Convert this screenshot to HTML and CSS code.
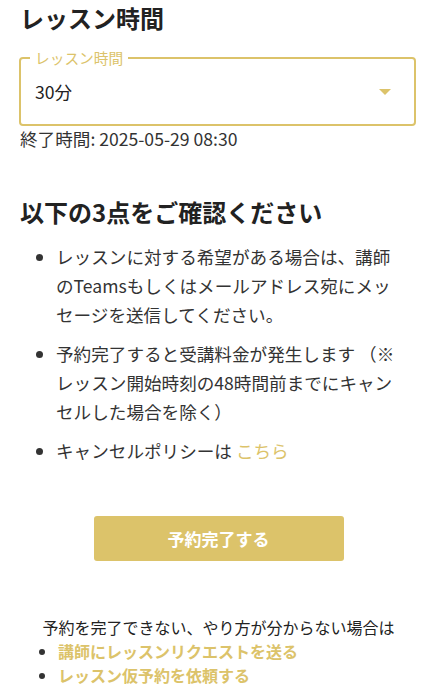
FILE: index.html
```html
<!DOCTYPE html>
<html lang="ja">
  <head>
    <meta charset="UTF-8" />
    <meta name="viewport" content="width=device-width, initial-scale=1.0" />
    <title>レッスン予約確認</title>
    <link rel="stylesheet" href="styles.css">
  </head>
  <body>
    <main class="page">
      <!-- レッスン時間 -->
      <section class="duration">
        <h2 class="section-title">レッスン時間</h2>
        <div class="select-box">
          <span class="select-label">レッスン時間</span>
          <span class="select-value">30分</span>
          <svg class="select-arrow" width="12" height="6" viewBox="0 0 12 6">
            <path d="M0 0h12L6 6z" fill="#dcc36a" />
          </svg>
        </div>
        <p class="end-time">終了時間: 2025-05-29 08:30</p>
      </section>

      <!-- 確認事項 -->
      <section class="notice">
        <h2 class="section-title">以下の3点をご確認ください</h2>
        <ul class="notice-list">
          <li>レッスンに対する希望がある場合は、講師のTeamsもしくはメールアドレス宛にメッセージを送信してください。</li>
          <li>予約完了すると受講料金が発生します （※レッスン開始時刻の48時間前までにキャンセルした場合を除く）</li>
          <li>キャンセルポリシーは <a href="#" class="link">こちら</a></li>
        </ul>
      </section>

      <div class="actions">
        <button class="submit-btn">予約完了する</button>
      </div>

      <!-- ヘルプ -->
      <section class="help">
        <p class="help-text">予約を完了できない、やり方が分からない場合は</p>
        <ul class="help-list">
          <li><a href="#" class="link strong">講師にレッスンリクエストを送る</a></li>
          <li><a href="#" class="link strong">レッスン仮予約を依頼する</a></li>
        </ul>
      </section>
    </main>
  </body>
</html>
```

FILE: styles.css
```css
:root {
  --gold: #dcc36a;
  --text-color: #333;
  --title-color: #222;
}

body {
  margin: 0;
  background-color: #fff;
  color: var(--text-color);
  font-family: "Noto Sans CJK JP", "Noto Sans", sans-serif;
}

.page {
  padding: 0 20px;
}

.section-title {
  margin: 0;
  font-size: 24px;
  line-height: 36px;
  font-weight: 700;
  color: var(--title-color);
}

/* セレクト */
.select-box {
  position: relative;
  display: flex;
  align-items: center;
  justify-content: space-between;
  margin: 21px 1px 0 -1px;
  padding: 0 23px 0 14px;
  height: 69px;
  box-sizing: border-box;
  border: 2px solid var(--gold);
  border-radius: 4px;
}
.select-label {
  position: absolute;
  top: -10px;
  left: 9px;
  padding: 0 5px;
  background-color: #fff;
  font-size: 14.7px;
  line-height: 18px;
  color: var(--gold);
}
.select-value {
  font-size: 17.6px;
  color: #222;
}
.end-time {
  margin: 3px 0 0;
  font-size: 17.6px;
  line-height: 20px;
}

/* 確認事項 */
.notice {
  margin-top: 45px;
}
.notice-list {
  margin: 12px 0 0;
  padding: 0 18px 0 36px;
  font-size: 17.6px;
  line-height: 29px;
}
.notice-list li {
  margin-bottom: 10px;
}
.link {
  color: var(--gold);
  text-decoration: none;
}
.link.strong {
  font-weight: 700;
}

.actions {
  display: flex;
  justify-content: center;
  margin-top: 51px;
}
.submit-btn {
  width: 250px;
  height: 45px;
  border: none;
  border-radius: 3px;
  background-color: var(--gold);
  color: #fff;
  font-family: inherit;
  font-size: 17px;
  font-weight: 700;
  cursor: pointer;
}

/* ヘルプ */
.help {
  margin-top: 54px;
}
.help-text {
  margin: 0;
  text-align: center;
  font-size: 16px;
  line-height: 24px;
  color: #222;
}
.help-list {
  margin: 0;
  padding-left: 38px;
  font-size: 16px;
  line-height: 24px;
}
```
